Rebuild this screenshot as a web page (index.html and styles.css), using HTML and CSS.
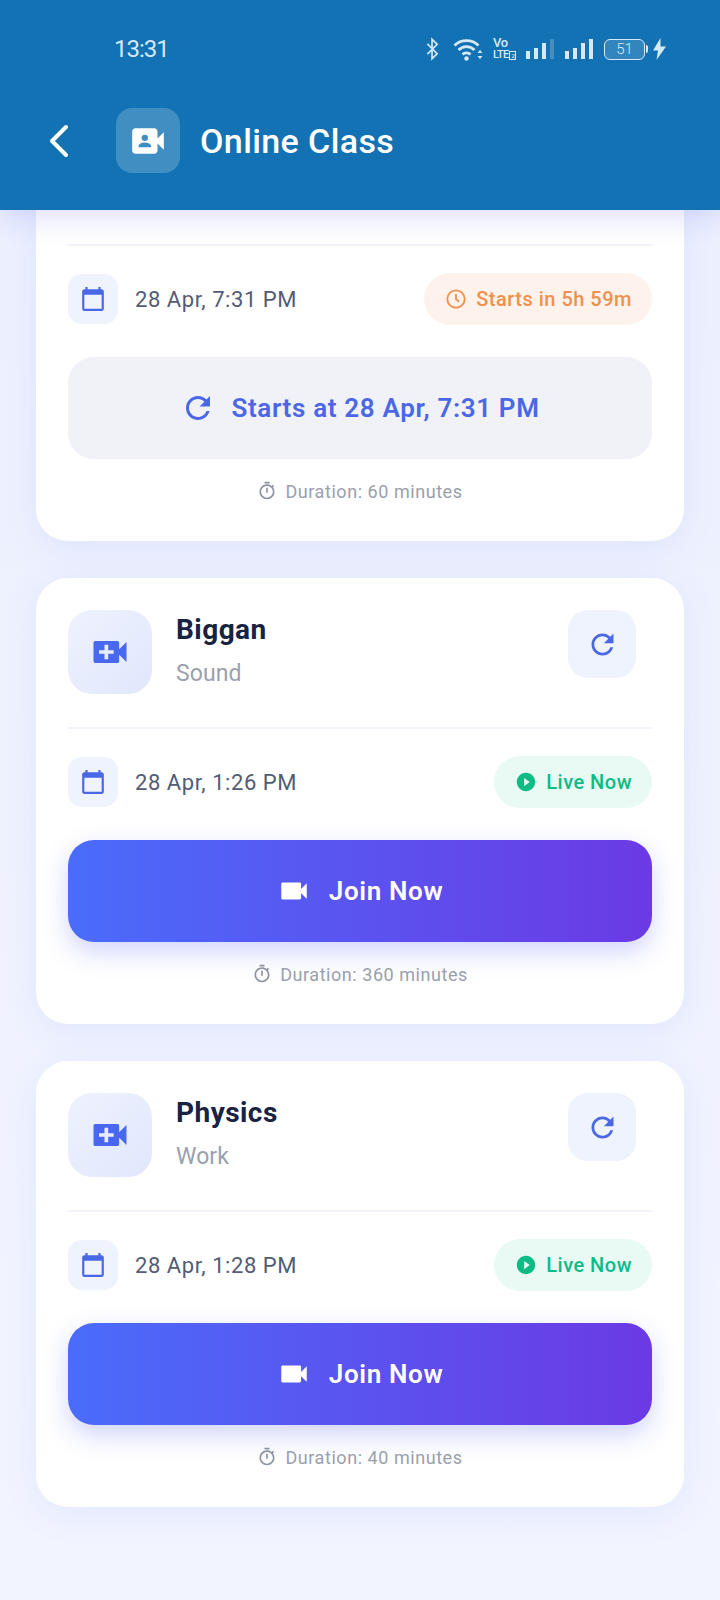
FILE: index.html
```html
<!DOCTYPE html>
<html lang="en">
<head>
<meta charset="utf-8">
<title>Online Class</title>
<link rel="stylesheet" href="styles.css">
</head>
<body>
<div class="screen">
  <header class="header">
    <div class="status">
      <span class="clock">13:31</span>
      <div class="status-icons">
        <svg class="si-bt" viewBox="0 0 14 24"><path d="M1.500 6.500 12 17l-5.500 5.500V1.500L12 7 1.500 17.500" fill="none" stroke="currentColor" stroke-width="1.800"/></svg>
        <svg class="si-wifi" viewBox="0 0 30 23"><g fill="none" stroke="currentColor" stroke-width="2.800"><path d="M1.500 7.500C8 1 19 1 25.500 7.500"/><path d="M5.500 12C10 7.500 17 7.500 21.500 12"/><path d="M9.500 16.500c2.200-2.200 5.800-2.200 8 0"/></g><circle cx="13.500" cy="20.500" r="2.200" fill="currentColor"/><path d="m24.500 15 2.500-3 2.500 3zM24.500 18l2.500 3 2.500-3z" fill="currentColor"/></svg>
        <div class="si-volte"><span class="vo">Vo</span><span class="lte">LTE<i>2</i></span></div>
        <svg class="si-bars" viewBox="0 0 30 22"><path d="M0 13h4v8H0zM8 10h4v11H8zM16 5h4v16h-4z" fill="currentColor"/><path d="M24 1h4v20h-4z" fill="currentColor" opacity=".25"/></svg>
        <svg class="si-bars" viewBox="0 0 30 22"><path d="M0 13h4v8H0zM8 10h4v11H8zM16 5h4v16h-4zM24 1h4v20h-4z" fill="currentColor"/></svg>
        <div class="si-batt"><span class="batt-body">51</span><span class="batt-tip"></span></div>
        <svg class="si-bolt" viewBox="0 0 13 22"><path d="M7.500 0 0 12.500h5L3.500 22 13 8.500H7.500z" fill="currentColor"/></svg>
      </div>
    </div>
    <div class="appbar">
      <svg class="back" viewBox="0 0 22 34"><path d="M18 3 4 17l14 14" fill="none" stroke="currentColor" stroke-width="4" stroke-linecap="round" stroke-linejoin="round"/></svg>
      <div class="app-icon">
        <svg viewBox="0 0 24 24"><path fill-rule="evenodd" fill="currentColor" d="M18 10.480V6c0-1.100-.9-2-2-2H4c-1.100 0-2 .9-2 2v12c0 1.100.9 2 2 2h12c1.100 0 2-.9 2-2v-4.480l4 3.980v-11l-4 3.980zM10 8a2 2 0 1 1 0 4 2 2 0 0 1 0-4zm-4 8v-.570c0-.81.48-1.530 1.220-1.850C8.070 13.210 9.010 13 10 13s1.930.21 2.780.58c.74.32 1.220 1.040 1.220 1.850V16H6z"/></svg>
      </div>
      <h1 class="title">Online Class</h1>
    </div>
  </header>

  <main class="list">
    <section class="card card-clipped">
      <div class="meta">
        <div class="date">
          <span class="date-icon"><svg viewBox="0 0 24 24"><use href="#i-cal"/></svg></span>
          <span class="date-text">28 Apr, 7:31 PM</span>
        </div>
        <span class="pill pill-soon"><svg viewBox="0 0 24 24"><circle cx="12" cy="12" r="9.500" fill="none" stroke="currentColor" stroke-width="2"/><path d="M12 6.500V12l3.500 3" fill="none" stroke="currentColor" stroke-width="2"/></svg>Starts in 5h 59m</span>
      </div>
      <div class="btn btn-wait"><svg viewBox="0 0 24 24"><use href="#i-refresh"/></svg>Starts at 28 Apr, 7:31 PM</div>
      <div class="duration"><svg viewBox="0 0 24 24"><use href="#i-timer"/></svg>Duration: 60 minutes</div>
    </section>

    <section class="card">
      <div class="card-head">
        <span class="class-icon"><svg viewBox="0 0 24 24"><use href="#i-video-add"/></svg></span>
        <div class="class-info">
          <div class="class-name">Biggan</div>
          <div class="class-topic">Sound</div>
        </div>
        <span class="refresh"><svg viewBox="0 0 24 24"><use href="#i-refresh"/></svg></span>
      </div>
      <div class="meta">
        <div class="date">
          <span class="date-icon"><svg viewBox="0 0 24 24"><use href="#i-cal"/></svg></span>
          <span class="date-text">28 Apr, 1:26 PM</span>
        </div>
        <span class="pill pill-live"><svg viewBox="0 0 24 24"><use href="#i-play"/></svg>Live Now</span>
      </div>
      <div class="btn btn-join"><svg viewBox="0 0 24 24"><use href="#i-video"/></svg>Join Now</div>
      <div class="duration"><svg viewBox="0 0 24 24"><use href="#i-timer"/></svg>Duration: 360 minutes</div>
    </section>

    <section class="card">
      <div class="card-head">
        <span class="class-icon"><svg viewBox="0 0 24 24"><use href="#i-video-add"/></svg></span>
        <div class="class-info">
          <div class="class-name">Physics</div>
          <div class="class-topic">Work</div>
        </div>
        <span class="refresh"><svg viewBox="0 0 24 24"><use href="#i-refresh"/></svg></span>
      </div>
      <div class="meta">
        <div class="date">
          <span class="date-icon"><svg viewBox="0 0 24 24"><use href="#i-cal"/></svg></span>
          <span class="date-text">28 Apr, 1:28 PM</span>
        </div>
        <span class="pill pill-live"><svg viewBox="0 0 24 24"><use href="#i-play"/></svg>Live Now</span>
      </div>
      <div class="btn btn-join"><svg viewBox="0 0 24 24"><use href="#i-video"/></svg>Join Now</div>
      <div class="duration"><svg viewBox="0 0 24 24"><use href="#i-timer"/></svg>Duration: 40 minutes</div>
    </section>
  </main>
</div>

<svg class="defs" aria-hidden="true">
  <defs>
    <path id="i-cal" fill="currentColor" d="M20 3h-1V1h-2v2H7V1H5v2H4c-1.100 0-2 .9-2 2v16c0 1.100.9 2 2 2h16c1.100 0 2-.9 2-2V5c0-1.100-.9-2-2-2zm0 18H4V8h16v13z"/>
    <path id="i-refresh" fill="currentColor" d="M17.650 6.350C16.200 4.900 14.210 4 12 4c-4.420 0-7.990 3.580-7.990 8s3.570 8 7.990 8c3.730 0 6.840-2.550 7.730-6h-2.080c-.82 2.330-3.040 4-5.650 4-3.310 0-6-2.690-6-6s2.690-6 6-6c1.660 0 3.140.69 4.220 1.780L13 11h7V4l-2.350 2.350z"/>
    <path id="i-timer" fill="currentColor" d="M15 1H9v2h6V1zm-4 13h2V8h-2v6zm8.030-6.610 1.420-1.420c-.43-.51-.9-.99-1.410-1.410l-1.420 1.420C16.070 4.740 14.120 4 12 4c-4.970 0-9 4.030-9 9s4.020 9 9 9 9-4.030 9-9c0-2.120-.74-4.070-1.970-5.610zM12 20c-3.870 0-7-3.130-7-7s3.130-7 7-7 7 3.130 7 7-3.130 7-7 7z"/>
    <path id="i-play" fill="currentColor" d="M12 2C6.480 2 2 6.480 2 12s4.480 10 10 10 10-4.480 10-10S17.520 2 12 2zm-2 14.500v-9l6 4.500-6 4.500z"/>
    <path id="i-video" fill="currentColor" d="M17 10.500V7c0-.55-.45-1-1-1H4c-.55 0-1 .45-1 1v10c0 .55.45 1 1 1h12c.55 0 1-.45 1-1v-3.500l4 4v-11l-4 4z"/>
    <path id="i-video-add" fill="currentColor" d="M17 10.500V7c0-.55-.45-1-1-1H4c-.55 0-1 .45-1 1v10c0 .55.45 1 1 1h12c.55 0 1-.45 1-1v-3.500l4 4v-11l-4 4zM14 13h-3v3H9v-3H6v-2h3V8h2v3h3v2z"/>
  </defs>
</svg>
</body>
</html>
```
FILE: styles.css
```css
* { box-sizing: border-box; }
html, body { margin: 0; padding: 0; }
body {
  width: 720px;
  height: 1600px;
  overflow: hidden;
  font-family: Roboto, "Liberation Sans", sans-serif;
  background: #f1f4ff;
}
.defs { width: 0; height: 0; display: block; }
.screen { display: flex; flex-direction: column; height: 1600px; background: linear-gradient(#ebeffe, #f2f5ff); }

.header {
  position: relative;
  z-index: 2;
  height: 210px;
  background: #1272b3;
  box-shadow: 0 6px 28px rgba(74, 92, 240, 0.2);
  color: #fff;
  padding-top: 29px;
}
.status {
  height: 40px;
  display: flex;
  align-items: center;
  justify-content: space-between;
  padding: 0 54px 0 114px;
  color: #d6e9f7;
  margin-bottom: 39px;
}
.clock { font-size: 24px; font-weight: 400; letter-spacing: -1px; }
.status-icons { display: flex; align-items: center; }
.si-bt { width: 13px; height: 24px; margin-right: 14px; }
.si-wifi { width: 30px; height: 23px; margin-right: 10px; }
.si-volte {
  display: flex;
  flex-direction: column;
  width: 24px;
  margin-right: 9px;
  font-weight: 500;
}
.vo { font-size: 13px; line-height: 12px; letter-spacing: -0.3px; }
.lte { font-size: 11px; line-height: 12px; letter-spacing: -0.7px; white-space: nowrap; }
.si-volte i { font-style: normal; font-size: 6px; border: 1px solid currentColor; line-height: 7px; padding: 0 1px; margin-left: 1px; }
.si-bars { width: 30px; height: 22px; margin-right: 9px; }
.si-batt { display: flex; align-items: center; margin-right: 5px; }
.batt-body {
  width: 41px;
  height: 21px;
  border: 1.500px solid currentColor;
  border-radius: 6px;
  background: rgba(255, 255, 255, 0.14);
  font-size: 15px;
  line-height: 18px;
  text-align: center;
  font-weight: 300;
}
.batt-tip { width: 2px; height: 8px; background: currentColor; margin-left: 1px; border-radius: 0 2px 2px 0; }
.si-bolt { width: 13px; height: 22px; }

.appbar { display: flex; align-items: center; height: 65px; padding-left: 48px; }
.back { width: 22px; height: 34px; margin-right: 46px; }
.app-icon {
  width: 64px;
  height: 65px;
  border-radius: 16px;
  background: rgba(255, 255, 255, 0.2);
  display: flex;
  align-items: center;
  justify-content: center;
  margin-right: 20px;
}
.app-icon svg { width: 38px; height: 38px; }
.title { margin: 0; font-size: 34px; font-weight: 500; letter-spacing: 0.4px; }

.list { display: flex; flex-direction: column; gap: 37px; padding: 0 36px; }
.card {
  background: #fff;
  border-radius: 32px;
  padding: 32px 32px 39px;
  box-shadow: 0 8px 36px rgba(74, 108, 247, 0.09);
}
.card-clipped {
  border-radius: 0 0 32px 32px;
  padding-top: 34px;
  position: relative;
}

.card-head {
  display: flex;
  align-items: flex-start;
  padding-bottom: 33px;
}
.class-icon {
  width: 84px;
  height: 84px;
  border-radius: 24px;
  background: linear-gradient(135deg, #eef2ff, #e1e7fc);
  color: #4a68ef;
  display: flex;
  align-items: center;
  justify-content: center;
  margin-right: 24px;
  flex: none;
}
.class-icon svg { width: 44px; height: 44px; }
.class-info { flex: 1; }
.class-name { font-size: 28px; line-height: 34px; font-weight: 700; color: #1a2242; margin-top: 3px; letter-spacing: 0.45px; }
.class-topic { font-size: 23px; line-height: 28px; color: #9aa0ad; margin-top: 13px; letter-spacing: 0.1px; }
.refresh {
  width: 68px;
  height: 68px;
  border-radius: 20px;
  background: #eff3fe;
  color: #4a68e6;
  display: flex;
  align-items: center;
  justify-content: center;
  margin-right: 16px;
}
.refresh svg { width: 33px; height: 33px; }

.meta {
  border-top: 2px solid #f1f3fb;
  padding-top: 27px;
  display: flex;
  align-items: center;
  justify-content: space-between;
}
.date { display: flex; align-items: center; }
.date-icon {
  width: 50px;
  height: 50px;
  border-radius: 14px;
  background: #eff3fe;
  color: #4a68e6;
  display: flex;
  align-items: center;
  justify-content: center;
  margin-right: 17px;
}
.date-icon svg { width: 26px; height: 26px; }
.date-text { font-size: 22px; font-weight: 400; color: #535c75; letter-spacing: 0.55px; }
.pill {
  height: 52px;
  border-radius: 26px;
  display: flex;
  align-items: center;
  font-size: 20px;
  font-weight: 500;
  letter-spacing: 0.5px;
  padding: 0 20px 0 21px;
}
.pill svg { width: 22px; height: 22px; margin-right: 9px; }
.pill-soon { background: #fef3ec; color: #f1904d; }
.pill-live { background: #e9f9f4; color: #0dbb85; }

.btn {
  height: 102px;
  margin-top: 32px;
  border-radius: 26px;
  display: flex;
  align-items: center;
  justify-content: center;
  font-size: 26px;
  font-weight: 600;
  letter-spacing: 0.66px;
}
.btn svg { width: 36px; height: 36px; margin-right: 15px; }
.btn-wait { background: #f0f2f8; color: #4a68e6; }
.btn-join {
  background: linear-gradient(90deg, #4a6cfb, #6b3ae4);
  color: #fff;
  box-shadow: 0 10px 26px rgba(74, 92, 240, 0.26);
}
.btn-join svg { width: 34px; height: 34px; margin-right: 18px; }
.duration {
  margin-top: 21px;
  height: 22px;
  display: flex;
  align-items: center;
  justify-content: center;
  font-size: 18px;
  letter-spacing: 0.55px;
  color: #9aa0ad;
}
.duration svg { width: 20px; height: 20px; margin-right: 8px; color: #8d93a1; }
```
